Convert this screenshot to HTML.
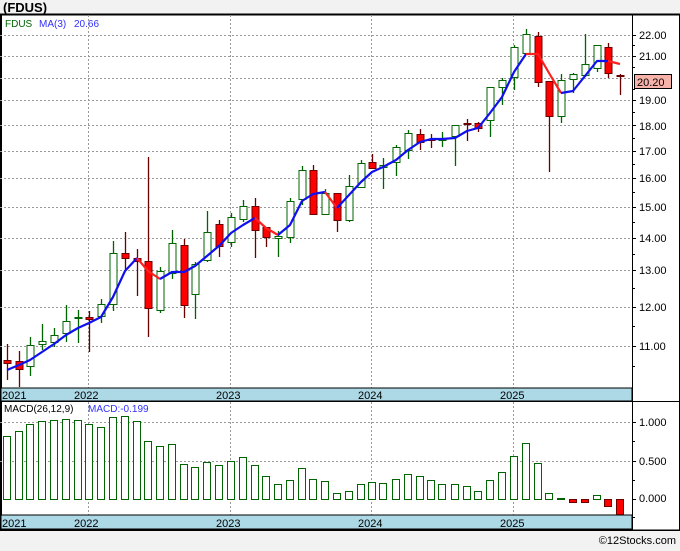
<!DOCTYPE html>
<html><head><meta charset="utf-8"><style>
body{margin:0;background:#f2f2f2;width:680px;height:546px;overflow:hidden;font-family:"Liberation Sans",sans-serif}
</style></head><body>
<svg width="680" height="546" xmlns="http://www.w3.org/2000/svg" font-family="Liberation Sans, sans-serif">
<rect x="0" y="0" width="680" height="546" fill="#f2f2f2"/>
<text x="3" y="12" font-size="13" font-weight="bold" fill="#000">(FDUS)</text>
<rect x="0.5" y="14.5" width="679" height="515.5" fill="#fff" stroke="#000"/>
<line x1="0" y1="14.5" x2="680" y2="14.5" stroke="#000" stroke-width="2"/>
<line x1="1" y1="14" x2="1" y2="530" stroke="#000" stroke-width="2"/>
<!-- grid main -->
<g stroke="#999" stroke-dasharray="2,2" stroke-width="1">
<line x1="0" y1="35.5" x2="632" y2="35.5"/><line x1="0" y1="56.5" x2="632" y2="56.5"/><line x1="0" y1="78.5" x2="632" y2="78.5"/><line x1="0" y1="100.5" x2="632" y2="100.5"/><line x1="0" y1="125.5" x2="632" y2="125.5"/><line x1="0" y1="151.5" x2="632" y2="151.5"/><line x1="0" y1="178.5" x2="632" y2="178.5"/><line x1="0" y1="207.5" x2="632" y2="207.5"/><line x1="0" y1="238.5" x2="632" y2="238.5"/><line x1="0" y1="270.5" x2="632" y2="270.5"/><line x1="0" y1="307.5" x2="632" y2="307.5"/><line x1="0" y1="346.5" x2="632" y2="346.5"/>
<line x1="88.5" y1="15" x2="88.5" y2="388"/><line x1="230.5" y1="15" x2="230.5" y2="388"/><line x1="371.5" y1="15" x2="371.5" y2="388"/><line x1="513.5" y1="15" x2="513.5" y2="388"/>
<line x1="0" y1="422.5" x2="632" y2="422.5"/><line x1="0" y1="461.5" x2="632" y2="461.5"/>
<line x1="88.5" y1="402" x2="88.5" y2="515"/><line x1="230.5" y1="402" x2="230.5" y2="515"/><line x1="371.5" y1="402" x2="371.5" y2="515"/><line x1="513.5" y1="402" x2="513.5" y2="515"/>
</g>
<text x="5" y="27" font-size="10" fill="#006400">FDUS</text>
<text x="39" y="27" font-size="10" fill="#3030ff">MA(3)</text>
<text x="74" y="27" font-size="10" fill="#3030ff">20.66</text>
<!-- candles -->
<g stroke-width="1">
<g id="c"></g>
</g>
<g fill="none" stroke-width="1.3">
<path stroke="#6b0000" d="M7.5 344V380M19.5 351V387M89.5 311V352M125.5 232V270M137.5 249V296M148.5 157V337M184.5 239V318M219.5 220V257M255.5 198V258M266.5 227V247M313.5 165V214M337.5 193V232M372.5 154V168M420.5 129V150M431.5 134V148M467.5 119V141M478.5 122V132M538.5 32V87M549.5 81V172M608.5 43V78M620.5 74V95"/>
<path stroke="#006400" d="M30.5 337V376M42.5 324V350M54.5 328V347M66.5 305V342M78.5 310V343M101.5 299V323M113.5 241V311M160.5 267V313M172.5 230V279M195.5 262V319M207.5 211V262M231.5 213V247M243.5 200V222M278.5 231V257M290.5 198V243M302.5 166V205M325.5 189V215M349.5 175V222M361.5 160V188M383.5 158V189M396.5 145V176M408.5 130V159M442.5 132V147M455.5 125V166M490.5 87V137M502.5 78V105M514.5 45V90M526.5 29V53M561.5 74V123M573.5 73V93M585.5 34V77M597.5 45V72"/>
</g>
<g fill="#fff" stroke="#006400">
<rect x="27" y="345.5" width="7" height="21"/><rect x="39" y="341.5" width="7" height="3"/><rect x="51" y="335.5" width="7" height="7"/><rect x="63" y="321.5" width="7" height="12"/><rect x="75" y="317.5" width="7" height="1"/><rect x="98" y="304.5" width="7" height="12"/><rect x="110" y="253.5" width="7" height="51"/><rect x="157" y="271.5" width="7" height="39"/><rect x="169" y="243.5" width="7" height="30"/><rect x="192" y="264.5" width="7" height="30"/><rect x="204" y="232.5" width="7" height="28"/><rect x="228" y="217.5" width="7" height="25"/><rect x="240" y="206.5" width="7" height="13"/><rect x="275" y="236.5" width="7" height="2"/><rect x="287" y="201.5" width="7" height="36"/><rect x="299" y="170.5" width="7" height="29"/><rect x="322" y="193.5" width="7" height="21"/><rect x="346" y="186.5" width="7" height="34"/><rect x="358" y="163.5" width="7" height="24"/><rect x="380" y="165.5" width="7" height="2"/><rect x="393" y="147.5" width="7" height="15"/><rect x="405" y="133.5" width="7" height="17"/><rect x="439" y="138.5" width="7" height="2"/><rect x="452" y="125.5" width="7" height="11"/><rect x="487" y="87.5" width="7" height="33"/><rect x="499" y="80.5" width="7" height="7"/><rect x="511" y="47.5" width="7" height="30"/><rect x="523" y="34.5" width="7" height="19"/><rect x="558" y="80.5" width="7" height="36"/><rect x="570" y="74.5" width="7" height="5"/><rect x="582" y="64.5" width="7" height="11"/><rect x="594" y="45.5" width="7" height="23"/>
</g>
<g fill="#ff0000" stroke="#6b0000">
<rect x="4" y="360.5" width="7" height="3"/><rect x="16" y="361.5" width="7" height="8"/><rect x="86" y="317.5" width="7" height="2"/><rect x="122" y="253.5" width="7" height="5"/><rect x="134" y="258.5" width="7" height="3"/><rect x="145" y="261.5" width="7" height="47"/><rect x="181" y="245.5" width="7" height="60"/><rect x="216" y="224.5" width="7" height="22"/><rect x="252" y="206.5" width="7" height="24"/><rect x="263" y="227.5" width="7" height="10"/><rect x="310" y="170.5" width="7" height="44"/><rect x="334" y="193.5" width="7" height="27"/><rect x="369" y="162.5" width="7" height="6"/><rect x="417" y="134.5" width="7" height="8"/><rect x="428" y="139.5" width="7" height="1"/><rect x="464" y="123.5" width="7" height="1"/><rect x="475" y="123.5" width="7" height="5"/><rect x="535" y="36.5" width="7" height="46"/><rect x="546" y="81.5" width="7" height="35"/><rect x="605" y="47.5" width="7" height="26"/><rect x="617" y="75.5" width="7" height="1"/>
</g>
<!-- MA line -->
<g fill="none" stroke-width="2.2" stroke-linejoin="round">
<polyline stroke="#1010ee" points="7,370 19,365 30,360 42,352 54,344 66,335 78,328 89,323 101,317 113,297 125,271 137,258"/>
<polyline stroke="#ff2020" points="137,258 148,271 160,279"/>
<polyline stroke="#1010ee" points="160,279 172,272 184,272 195,266 207,256 220,245 231,233 243,225 255,218"/>
<polyline stroke="#ff2020" points="255,218 266,228 278,235"/>
<polyline stroke="#1010ee" points="278,235 290,225 302,201 313,194 325,192"/>
<polyline stroke="#ff2020" points="325,192 337,208"/>
<polyline stroke="#1010ee" points="337,208 349,195 361,182 372,172 383,167 396,160 408,150 420,142 431,139 442,139 455,138 467,131 478,128 490,113 502,97 514,72 526,54"/>
<polyline stroke="#ff2020" points="526,54 538,54 549,73 561,93"/>
<polyline stroke="#1010ee" points="561,93 573,91 585,76 597,61 608,61"/>
<polyline stroke="#ff2020" points="608,61 620,64"/>
</g>
<!-- date strips -->
<rect x="1" y="388" width="631" height="13" fill="#add8e6" stroke="#000"/>
<rect x="1" y="515" width="631" height="14" fill="#add8e6" stroke="#000"/>
<g font-size="11" fill="#000">
<text x="2" y="399">2021</text><text x="74" y="399">2022</text><text x="216" y="399">2023</text><text x="358" y="399">2024</text><text x="500" y="399">2025</text>
<text x="2" y="527">2021</text><text x="74" y="527">2022</text><text x="216" y="527">2023</text><text x="358" y="527">2024</text><text x="500" y="527">2025</text>
</g>
<line x1="0" y1="401.5" x2="680" y2="401.5" stroke="#000"/>
<line x1="632.5" y1="14" x2="632.5" y2="530" stroke="#000"/>
<!-- right axis -->
<g font-size="11" fill="#000">
<text x="639" y="39">22.00</text><text x="639" y="60">21.00</text><text x="639" y="104">19.00</text><text x="639" y="130">18.00</text><text x="639" y="155">17.00</text><text x="639" y="182">16.00</text><text x="639" y="211">15.00</text><text x="639" y="242">14.00</text><text x="639" y="274">13.00</text><text x="639" y="311">12.00</text><text x="639" y="350">11.00</text>
<text x="639" y="426">1.000</text><text x="639" y="465">0.500</text><text x="639" y="502">0.000</text>
</g>
<g stroke="#000">
<path d="M632 35.5h4M632 56.5h4M632 100.5h4M632 125.5h4M632 151.5h4M632 178.5h4M632 207.5h4M632 238.5h4M632 270.5h4M632 307.5h4M632 346.5h4M632 45.5h3M632 67.5h3M632 89.5h3M632 112.5h3M632 138.5h3M632 164.5h3M632 192.5h3M632 222.5h3M632 254.5h3M632 288.5h3M632 326.5h3M632 366.5h3M632 422.5h4M632 461.5h4M632 499.5h4M632 441.5h3M632 480.5h3M632 517.5h3"/>
</g>
<rect x="634.5" y="74.5" width="37" height="14" fill="#f7b2aa" stroke="#000"/>
<text x="637" y="86" font-size="11" fill="#000">20.20</text>
<!-- MACD -->
<text x="4" y="412" font-size="10" fill="#000">MACD(26,12,9)</text>
<text x="88" y="412" font-size="10" fill="#3030ff">MACD:-0.199</text>
<g fill="#fff" stroke="#006400">
<rect x="3.5" y="436.5" width="7" height="63"/><rect x="15.5" y="431.5" width="7" height="68"/><rect x="26.5" y="424.5" width="7" height="75"/><rect x="38.5" y="421.5" width="7" height="78"/><rect x="50.5" y="420.5" width="7" height="79"/><rect x="62.5" y="419.5" width="7" height="80"/><rect x="74.5" y="420.5" width="7" height="79"/><rect x="85.5" y="424.5" width="7" height="75"/><rect x="97.5" y="427.5" width="7" height="72"/><rect x="109.5" y="417.5" width="7" height="82"/><rect x="121.5" y="416.5" width="7" height="83"/><rect x="133.5" y="421.5" width="7" height="78"/><rect x="144.5" y="441.5" width="7" height="58"/><rect x="156.5" y="446.5" width="7" height="53"/><rect x="168.5" y="444.5" width="7" height="55"/><rect x="180.5" y="464.5" width="7" height="35"/><rect x="191.5" y="467.5" width="7" height="32"/><rect x="203.5" y="462.5" width="7" height="37"/><rect x="215.5" y="465.5" width="7" height="34"/><rect x="227.5" y="461.5" width="7" height="38"/><rect x="239.5" y="457.5" width="7" height="42"/><rect x="251.5" y="465.5" width="7" height="34"/><rect x="262.5" y="476.5" width="7" height="23"/><rect x="274.5" y="484.5" width="7" height="15"/><rect x="286.5" y="480.5" width="7" height="19"/><rect x="298.5" y="468.5" width="7" height="31"/><rect x="309.5" y="479.5" width="7" height="20"/><rect x="321.5" y="481.5" width="7" height="18"/><rect x="333.5" y="493.5" width="7" height="6"/><rect x="345.5" y="491.5" width="7" height="8"/><rect x="357.5" y="484.5" width="7" height="15"/><rect x="368.5" y="482.5" width="7" height="17"/><rect x="379.5" y="483.5" width="7" height="16"/><rect x="392.5" y="479.5" width="7" height="20"/><rect x="404.5" y="474.5" width="7" height="25"/><rect x="416.5" y="476.5" width="7" height="23"/><rect x="427.5" y="480.5" width="7" height="19"/><rect x="438.5" y="484.5" width="7" height="15"/><rect x="451.5" y="484.5" width="7" height="15"/><rect x="463.5" y="486.5" width="7" height="13"/><rect x="474.5" y="491.5" width="7" height="8"/><rect x="486.5" y="480.5" width="7" height="19"/><rect x="498.5" y="472.5" width="7" height="27"/><rect x="510.5" y="456.5" width="7" height="43"/><rect x="522.5" y="443.5" width="7" height="56"/><rect x="534.5" y="463.5" width="7" height="36"/><rect x="545.5" y="493.5" width="7" height="6"/><rect x="557.5" y="498.5" width="7" height="1"/><rect x="593.5" y="495.5" width="7" height="4"/>
</g>
<g fill="#ff0000" stroke="#6b0000">
<rect x="569.5" y="499.5" width="7" height="3"/><rect x="581.5" y="499.5" width="7" height="3"/><rect x="604.5" y="499.5" width="7" height="7"/><rect x="616.5" y="499.5" width="7" height="15"/>
</g>
<line x1="0" y1="530.5" x2="680" y2="530.5" stroke="#000"/>
<text x="676" y="544" font-size="11" fill="#000" text-anchor="end">©12Stocks.com</text>
</svg>
</body></html>
